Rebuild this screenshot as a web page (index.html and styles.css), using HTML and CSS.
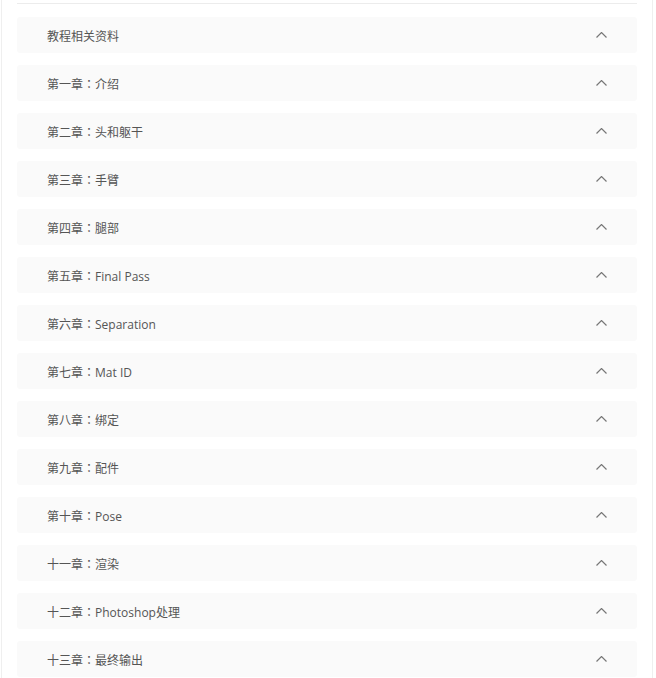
FILE: index.html
```html
<!DOCTYPE html>
<html lang="zh">
<head>
<meta charset="utf-8">
<link rel="stylesheet" href="styles.css">
</head>
<body>
<div class="panel">
  <div class="top-line"></div>
  <ul class="list">
    <li class="item"><span class="title">教程相关资料</span><svg class="chev" viewBox="0 0 11 6" width="11" height="6"><polyline points="0.5,5.5 5.5,0.5 10.5,5.5"/></svg></li>
    <li class="item"><span class="title">第一章<span class="colon" lang="zh-Hant">：</span>介绍</span><svg class="chev" viewBox="0 0 11 6" width="11" height="6"><polyline points="0.5,5.5 5.5,0.5 10.5,5.5"/></svg></li>
    <li class="item"><span class="title">第二章<span class="colon" lang="zh-Hant">：</span>头和躯干</span><svg class="chev" viewBox="0 0 11 6" width="11" height="6"><polyline points="0.5,5.5 5.5,0.5 10.5,5.5"/></svg></li>
    <li class="item"><span class="title">第三章<span class="colon" lang="zh-Hant">：</span>手臂</span><svg class="chev" viewBox="0 0 11 6" width="11" height="6"><polyline points="0.5,5.5 5.5,0.5 10.5,5.5"/></svg></li>
    <li class="item"><span class="title">第四章<span class="colon" lang="zh-Hant">：</span>腿部</span><svg class="chev" viewBox="0 0 11 6" width="11" height="6"><polyline points="0.5,5.5 5.5,0.5 10.5,5.5"/></svg></li>
    <li class="item"><span class="title">第五章<span class="colon" lang="zh-Hant">：</span>Final Pass</span><svg class="chev" viewBox="0 0 11 6" width="11" height="6"><polyline points="0.5,5.5 5.5,0.5 10.5,5.5"/></svg></li>
    <li class="item"><span class="title">第六章<span class="colon" lang="zh-Hant">：</span>Separation</span><svg class="chev" viewBox="0 0 11 6" width="11" height="6"><polyline points="0.5,5.5 5.5,0.5 10.5,5.5"/></svg></li>
    <li class="item"><span class="title">第七章<span class="colon" lang="zh-Hant">：</span>Mat ID</span><svg class="chev" viewBox="0 0 11 6" width="11" height="6"><polyline points="0.5,5.5 5.5,0.5 10.5,5.5"/></svg></li>
    <li class="item"><span class="title">第八章<span class="colon" lang="zh-Hant">：</span>绑定</span><svg class="chev" viewBox="0 0 11 6" width="11" height="6"><polyline points="0.5,5.5 5.5,0.5 10.5,5.5"/></svg></li>
    <li class="item"><span class="title">第九章<span class="colon" lang="zh-Hant">：</span>配件</span><svg class="chev" viewBox="0 0 11 6" width="11" height="6"><polyline points="0.5,5.5 5.5,0.5 10.5,5.5"/></svg></li>
    <li class="item"><span class="title">第十章<span class="colon" lang="zh-Hant">：</span>Pose</span><svg class="chev" viewBox="0 0 11 6" width="11" height="6"><polyline points="0.5,5.5 5.5,0.5 10.5,5.5"/></svg></li>
    <li class="item"><span class="title">十一章<span class="colon" lang="zh-Hant">：</span>渲染</span><svg class="chev" viewBox="0 0 11 6" width="11" height="6"><polyline points="0.5,5.5 5.5,0.5 10.5,5.5"/></svg></li>
    <li class="item"><span class="title">十二章<span class="colon" lang="zh-Hant">：</span>Photoshop处理</span><svg class="chev" viewBox="0 0 11 6" width="11" height="6"><polyline points="0.5,5.5 5.5,0.5 10.5,5.5"/></svg></li>
    <li class="item"><span class="title">十三章<span class="colon" lang="zh-Hant">：</span>最终输出</span><svg class="chev" viewBox="0 0 11 6" width="11" height="6"><polyline points="0.5,5.5 5.5,0.5 10.5,5.5"/></svg></li>
  </ul>
</div>
</body>
</html>
```
FILE: styles.css
```css
html, body {
  margin: 0;
  padding: 0;
  background: #fff;
}
body {
  font-family: "Open Sans", "Noto Sans CJK SC", sans-serif;
  height: 678px;
  overflow: hidden;
}
.panel {
  margin-left: 1px;
  width: 620px;
  padding: 0 15px;
  border-left: 1px solid #efefef;
  border-right: 1px solid #efefef;
  min-height: 700px;
}
.top-line {
  height: 3px;
  border-bottom: 1px solid #ececec;
}
.list {
  list-style: none;
  margin: 13px 0 0;
  padding: 0;
  display: flex;
  flex-direction: column;
  gap: 12px;
}
.item {
  height: 36px;
  background: #fafafa;
  border-radius: 3px;
  display: flex;
  align-items: center;
  justify-content: space-between;
  padding: 0 30px 0 30px;
}
.title {
  font-size: 12px;
  color: #555;
  padding-top: 2px;
}
.colon {
  font-family: "Noto Sans CJK TC", sans-serif;
}
.chev {
  fill: none;
  stroke: #777;
  stroke-width: 1.2;
}
```
